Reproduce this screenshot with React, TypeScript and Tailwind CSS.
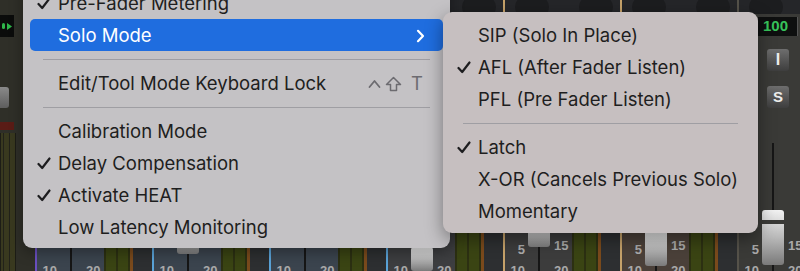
import React from "react";

type Channel = {
  bg: string;
  line: string;
  cap: string;
  notch?: boolean;
  low?: boolean;
};

const channels: Channel[] = [
  { bg: "bg-[#3b444e]", line: "bg-[#6a4fc0]", cap: "mt-[88px] h-[18px]" },
  { bg: "bg-[#3b444e]", line: "bg-[#5aa3d8]", cap: "mt-[96px] h-[24px]" },
  { bg: "bg-[#3b444e]", line: "bg-[#5aa3d8]", cap: "mt-[90px] h-[22px]", notch: true },
  { bg: "bg-[#3d3e40]", line: "bg-[#5aa3d8]", cap: "mt-[113px] h-[24px]" },
  { bg: "bg-[#3c3c3c]", line: "bg-[#c6a26a]", cap: "mt-[92px] h-[21px]", low: true },
  { bg: "bg-[#4a4039]", line: "bg-[#c6a26a]", cap: "mt-[96px] h-[36px]", low: true },
  { bg: "bg-[#3a3a37]", line: "bg-[#55524a]", cap: "mt-[76px] h-[55px]", notch: true, low: true },
];

function Check() {
  return (
    <svg width="14" height="13" viewBox="0 0 14 13" className="shrink-0">
      <path d="M1.5 7 L5.2 11 L12.5 1.5" fill="none" stroke="#1d1d1f" strokeWidth="2.2" strokeLinecap="round" strokeLinejoin="round" />
    </svg>
  );
}

function Strip({ c, last }: { c: Channel; last: boolean }) {
  const num = "font-['Liberation_Sans',sans-serif] text-[13px] font-bold leading-none text-[#a9a9a9]";
  const btn =
    "ml-[28px] flex h-[22px] w-[22px] items-center justify-center rounded-[3px] bg-gradient-to-b from-[#6e6e6e] to-[#3e3e3e] font-['Liberation_Sans',sans-serif] font-bold text-[#ececec]";
  return (
    <div className={`flex h-full w-[117px] shrink-0 ${c.bg}`}>
      <div className={`h-full w-[2px] ${c.line}`} />
      <div className="flex w-[115px] flex-col">
        <div className="flex h-[14px] shrink-0 items-center gap-[30px] overflow-hidden bg-[#252629] px-[10px]">
          <div className="h-[22px] w-[34px] shrink-0 rounded-full bg-[#1c1d1f]" />
          <div className="h-[22px] w-[34px] shrink-0 rounded-full bg-[#1c1d1f]" />
        </div>
        <div className="h-[120px] shrink-0">
          {last && (
            <>
              <div className="ml-[19px] mt-[3px] flex h-[19px] w-[40px] items-center border-r border-[#555] bg-[#0e0f0f] pl-[5px] font-['Liberation_Sans',sans-serif] text-[15px] font-bold text-[#37c35a]">
                100
              </div>
              <div className={`mt-[13px] text-[16px] ${btn}`}>I</div>
              <div className={`mt-[15px] text-[15px] ${btn}`}>S</div>
            </>
          )}
        </div>
        <div className="flex flex-1">
          <div className={`flex w-[23px] flex-col items-end justify-end pr-[3px] ${num}`}>
            {c.low && <span className="mb-[8px]">5</span>}
            <span className="mb-[-6px]">10</span>
          </div>
          <div className="relative flex w-[22px] flex-col items-center">
            <div className="absolute bottom-0 left-[10px] top-[9px] w-[2px] bg-[#161616]" />
            <div className={`relative w-[22px] shrink-0 rounded-[3px] bg-gradient-to-b from-[#f2f2f2] via-[#b9b9b9] to-[#7a7a7a] ${c.cap}`}>
              {c.notch && <div className="mt-[45%] h-[4px] w-[22px] bg-[#3a3a37]" />}
            </div>
          </div>
          <div className={`flex w-[22px] flex-col items-start justify-end pl-[4px] ${num}`}>
            {c.low && <span className="mb-[12px]">15</span>}
            <span className="mb-[-6px]">20</span>
          </div>
          <div className="flex w-[26px] gap-[2px] bg-[#2c3012] px-[2px]">
            <div className="h-full flex-1 bg-[#3a4413]" />
            <div className="h-full flex-1 bg-[#3a4413]" />
          </div>
          <div className="h-full w-[3px] bg-[#7a4a1c]" />
          <div className="h-full flex-1 bg-[#2d2f31]" />
        </div>
      </div>
    </div>
  );
}

function Row({
  label,
  checked,
  active,
  right,
}: {
  label: string;
  checked?: boolean;
  active?: boolean;
  right?: React.ReactNode;
}) {
  return (
    <div
      className={`mx-[7px] flex h-[32px] items-center rounded-[5px] pl-[7px] ${right ? "pr-[20px]" : "pr-[4px]"} ${
        active ? "bg-[#1f6ddf] text-white" : "text-[#1e1e20]"
      }`}
    >
      <div className="flex w-[21px] shrink-0 items-center">{checked && <Check />}</div>
      <span className="flex-1 whitespace-nowrap pt-[2px]">{label}</span>
      {right}
    </div>
  );
}

function Sep() {
  return (
    <div className="flex h-[16px] items-center px-[20px]">
      <div className="h-[1px] w-full bg-[#9f9ea3]" />
    </div>
  );
}

function Shortcut() {
  return (
    <div className="flex items-center gap-[4px] pt-[2px] text-[#6c6b70]">
      <svg width="13" height="10" viewBox="0 0 13 10">
        <path d="M1.5 8 L6.5 2 L11.5 8" fill="none" stroke="#6c6b70" strokeWidth="1.8" strokeLinecap="round" strokeLinejoin="round" />
      </svg>
      <svg width="17" height="16" viewBox="0 0 17 16">
        <path d="M8.5 1.5 L15.5 8.5 L11.5 8.5 L11.5 14.5 L5.5 14.5 L5.5 8.5 L1.5 8.5 Z" fill="none" stroke="#6c6b70" strokeWidth="1.5" strokeLinejoin="round" />
      </svg>
      <span className="ml-[5px]">T</span>
    </div>
  );
}

function Chevron() {
  return (
    <svg width="9" height="14" viewBox="0 0 9 14" className="mr-[-2px] mt-[2px]">
      <path d="M2 1.8 L7 7 L2 12.2" fill="none" stroke="white" strokeWidth="2.2" strokeLinecap="round" strokeLinejoin="round" />
    </svg>
  );
}

export default function App() {
  return (
    <div className="relative h-[271px] w-[800px] overflow-hidden bg-[#2d2e30] font-['Inter',sans-serif] text-[18.5px]">
      <div className="flex h-full">
        <div className="flex h-full w-[35px] shrink-0 flex-col bg-[#2f2f28]">
          <div className="mt-[15px] flex h-[22px] w-[14px] items-center justify-end gap-[2px] bg-[#0b0c0b] pr-[2px]">
            <div className="h-[6px] w-[3px] rounded-full bg-[#2fb64a]" />
            <svg width="5" height="7" viewBox="0 0 5 7"><path d="M0 0 L5 3.5 L0 7 Z" fill="#2fb64a" /></svg>
          </div>
          <div className="mt-[50px] h-[21px] w-[9px] rounded-r-[3px] bg-gradient-to-b from-[#8a8a8a] to-[#5e5e5e]" />
          <div className="mt-[14px] h-[8px] w-[14px] bg-[#5a1c16]" />
          <div className="mt-[3px] flex w-[16px] flex-1 gap-[3px] border-x border-[#1d1d16] bg-[#39391f] px-[2px]">
            <div className="w-[1px] bg-[#22221a]" />
            <div className="ml-[2px] w-[1px] bg-[#22221a]" />
          </div>
        </div>
        {channels.map((c, i) => (
          <Strip key={i} c={c} last={i === channels.length - 1} />
        ))}
      </div>

      <div className="absolute left-[23px] top-[-18px] w-[427px] rounded-b-[9px] bg-[#c4c2c5] py-[5px] shadow-[0_4px_14px_rgba(0,0,0,0.35)]">
        <Row label="Pre-Fader Metering" checked />
        <Row label="Solo Mode" active right={<Chevron />} />
        <Sep />
        <Row label="Edit/Tool Mode Keyboard Lock" right={<Shortcut />} />
        <Sep />
        <Row label="Calibration Mode" />
        <Row label="Delay Compensation" checked />
        <Row label="Activate HEAT" checked />
        <Row label="Low Latency Monitoring" />
      </div>

      <div className="absolute left-[443px] top-[12px] w-[315px] rounded-[9px] bg-[#c6bfc0] pb-[6px] pt-[7px] shadow-[0_6px_18px_rgba(0,0,0,0.4)]">
        <Row label="SIP (Solo In Place)" />
        <Row label="AFL (After Fader Listen)" checked />
        <Row label="PFL (Pre Fader Listen)" />
        <Sep />
        <Row label="Latch" checked />
        <Row label="X-OR (Cancels Previous Solo)" />
        <Row label="Momentary" />
      </div>
    </div>
  );
}
